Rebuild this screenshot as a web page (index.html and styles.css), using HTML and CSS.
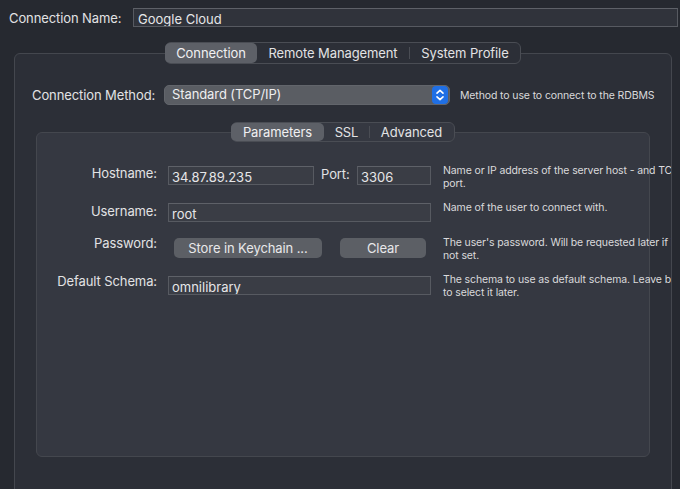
FILE: index.html
```html
<!DOCTYPE html>
<html>
<head>
<meta charset="utf-8">
<link rel="stylesheet" href="styles.css">
</head>
<body>
<div class="name-row">
  <span class="lbl name-lbl">Connection Name:</span>
  <div class="field name-field">Google Cloud</div>
</div>
<div class="group outer-group">
  <div class="tabs outer-tabs">
    <span class="tab sel t-conn">Connection</span>
    <span class="tab t-remote">Remote Management</span>
    <span class="sep"></span>
    <span class="tab t-sys">System Profile</span>
  </div>
  <div class="box outer-box">
    <div class="method-row">
      <span class="lbl method-lbl">Connection Method:</span>
      <div class="popup">
        <span class="popup-text">Standard (TCP/IP)</span>
        <span class="stepper">
          <svg width="16" height="18" viewBox="0 0 16 18"><path d="M5 7.2 L8 4.4 L11 7.2 M5 10.8 L8 13.6 L11 10.8" fill="none" stroke="#fff" stroke-width="1.6" stroke-linecap="round" stroke-linejoin="round"/></svg>
        </span>
      </div>
      <span class="help method-help">Method to use to connect to the RDBMS</span>
    </div>
    <div class="group inner-group">
      <div class="tabs inner-tabs">
        <span class="tab sel t-param">Parameters</span>
        <span class="tab t-ssl">SSL</span>
        <span class="sep"></span>
        <span class="tab t-adv">Advanced</span>
      </div>
      <div class="box inner-box">
        <div class="row r-host">
          <span class="lbl rlbl">Hostname:</span>
          <div class="ctl">
            <div class="field host-field">34.87.89.235</div>
            <span class="lbl port-lbl">Port:</span>
            <div class="field port-field">3306</div>
          </div>
          <span class="help">Name or IP address of the server host - and TCP/IP<br>port.</span>
        </div>
        <div class="row r-user">
          <span class="lbl rlbl">Username:</span>
          <div class="ctl">
            <div class="field wide-field">root</div>
          </div>
          <span class="help">Name of the user to connect with.</span>
        </div>
        <div class="row r-pass">
          <span class="lbl rlbl">Password:</span>
          <div class="ctl">
            <span class="btn btn-store">Store in Keychain ...</span>
            <span class="btn btn-clear">Clear</span>
          </div>
          <span class="help">The user's password. Will be requested later if it's<br>not set.</span>
        </div>
        <div class="row r-schema">
          <span class="lbl rlbl">Default Schema:</span>
          <div class="ctl">
            <div class="field wide-field">omnilibrary</div>
          </div>
          <span class="help">The schema to use as default schema. Leave blank<br>to select it later.</span>
        </div>
      </div>
    </div>
  </div>
</div>
</body>
</html>
```
FILE: styles.css
```css
html, body {
  margin: 0;
  padding: 0;
  height: 489px;
  overflow: hidden;
}
body {
  background: #262930;
  font-family: Inter, "Noto Sans", "Liberation Sans", sans-serif;
  font-size: 13px;
  color: #e2e2e4;
  width: 680px;
}
.lbl {
  white-space: nowrap;
  letter-spacing: -0.1px;
  flex-shrink: 0;
}
.name-row {
  display: flex;
  align-items: center;
  padding: 8px 0 0 9px;
  height: 19px;
}
.name-lbl {
  width: 124px;
}
.field {
  box-sizing: border-box;
  flex-shrink: 0;
  height: 19px;
  background: #3a3d45;
  border: 1px solid #575a61;
  border-top-color: #5e6168;
  padding: 2px 0 0 3px;
  display: flex;
  align-items: center;
  color: #e6e6e8;
  white-space: nowrap;
  overflow: hidden;
}
.name-field {
  width: 545px;
  padding-left: 4px;
  background: #30333b;
}
.group {
  display: flex;
  flex-direction: column;
  align-items: center;
}
.outer-group {
  margin: 15px 0 0 14px;
  width: 658px;
}
.tabs {
  position: relative;
  z-index: 2;
  display: flex;
  align-items: center;
  box-sizing: border-box;
  background: #2c2f37;
  border: 1px solid #4a4d54;
  border-radius: 6px;
  flex-shrink: 0;
}
.outer-tabs {
  height: 22px;
  width: 356px;
}
.inner-tabs {
  height: 20px;
  width: 224px;
  background: #353841;
}
.tab {
  height: 100%;
  box-sizing: border-box;
  display: flex;
  align-items: center;
  justify-content: center;
  white-space: nowrap;
  border-radius: 5px;
  flex-shrink: 0;
  letter-spacing: -0.1px;
}
.tab.sel {
  background: #5d6067;
  color: #f0f0f2;
}
.sep {
  width: 1px;
  height: 12px;
  background: #4a4d54;
  flex-shrink: 0;
}
.t-conn { width: 92px; margin-left: -1px; }
.t-remote { width: 152px; }
.t-sys { width: 110px; }
.t-param { width: 93px; margin-left: -1px; }
.t-ssl { width: 45px; }
.t-adv { width: 83px; }
.box {
  box-sizing: border-box;
  border: 1px solid #44474e;
  border-radius: 6px;
  width: 100%;
}
.outer-box {
  margin-top: -11px;
  background: #2c2f37;
  height: 445px;
  padding-top: 31px;
  overflow: hidden;
  display: flex;
  flex-direction: column;
}
.method-row {
  display: flex;
  align-items: center;
  margin-left: 17px;
  height: 20px;
  flex-shrink: 0;
}
.method-lbl {
  width: 132px;
}
.popup {
  box-sizing: border-box;
  flex-shrink: 0;
  width: 286px;
  height: 20px;
  border-radius: 5px;
  background: #5a5d63;
  border: 1px solid #62656b;
  display: flex;
  align-items: center;
  justify-content: space-between;
  padding-left: 7px;
  padding-right: 1px;
}
.popup-text {
  color: #eeeef0;
  margin-top: -2px;
  letter-spacing: -0.1px;
}
.stepper {
  width: 16px;
  height: 18px;
  background: #1f6fe5;
  border-radius: 4px;
  display: flex;
}
.help {
  font-size: 10.5px;
  letter-spacing: -0.12px;
  color: #dadadc;
  white-space: nowrap;
  line-height: 13px;
  flex-shrink: 0;
}
.method-help {
  margin-left: 10px;
}
.inner-group {
  margin: 17px 21px 0 21px;
  width: 614px;
  align-self: flex-start;
  flex-shrink: 0;
}
.inner-box {
  margin-top: -10px;
  background: #353841;
  height: 325px;
  padding-top: 33px;
  overflow: visible;
}
.row {
  display: flex;
  align-items: flex-start;
}
.r-host { height: 37px; }
.r-user { height: 35px; }
.r-pass { height: 38px; }
.rlbl {
  width: 120px;
  text-align: right;
  margin-right: 11px;
}
.r-host .rlbl { margin-top: -1px; }
.r-user .rlbl { margin-top: 0px; }
.r-pass .rlbl { margin-top: -3px; }
.r-schema .rlbl { margin-top: -3px; }
.ctl {
  width: 263px;
  margin-right: 12px;
  display: flex;
  align-items: center;
  flex-shrink: 0;
}
.host-field { width: 146px; }
.port-lbl { margin: -3px 7px 0 7px; width: 29px; }
.port-field { width: 74px; }
.wide-field { width: 263px; }
.r-host .help { margin-top: -2px; }
.r-user .help { margin-top: -2px; }
.r-pass .help { margin-top: -2px; }
.r-schema .help { margin-top: -3px; }
.btn {
  box-sizing: border-box;
  flex-shrink: 0;
  height: 20px;
  border-radius: 5px;
  background: #5c5f65;
  display: flex;
  align-items: center;
  justify-content: center;
  white-space: nowrap;
  color: #e8e8ea;
  letter-spacing: -0.1px;
}
.btn-store { width: 148px; margin-left: 6px; }
.btn-clear { width: 86px; margin-left: 18px; }
```
